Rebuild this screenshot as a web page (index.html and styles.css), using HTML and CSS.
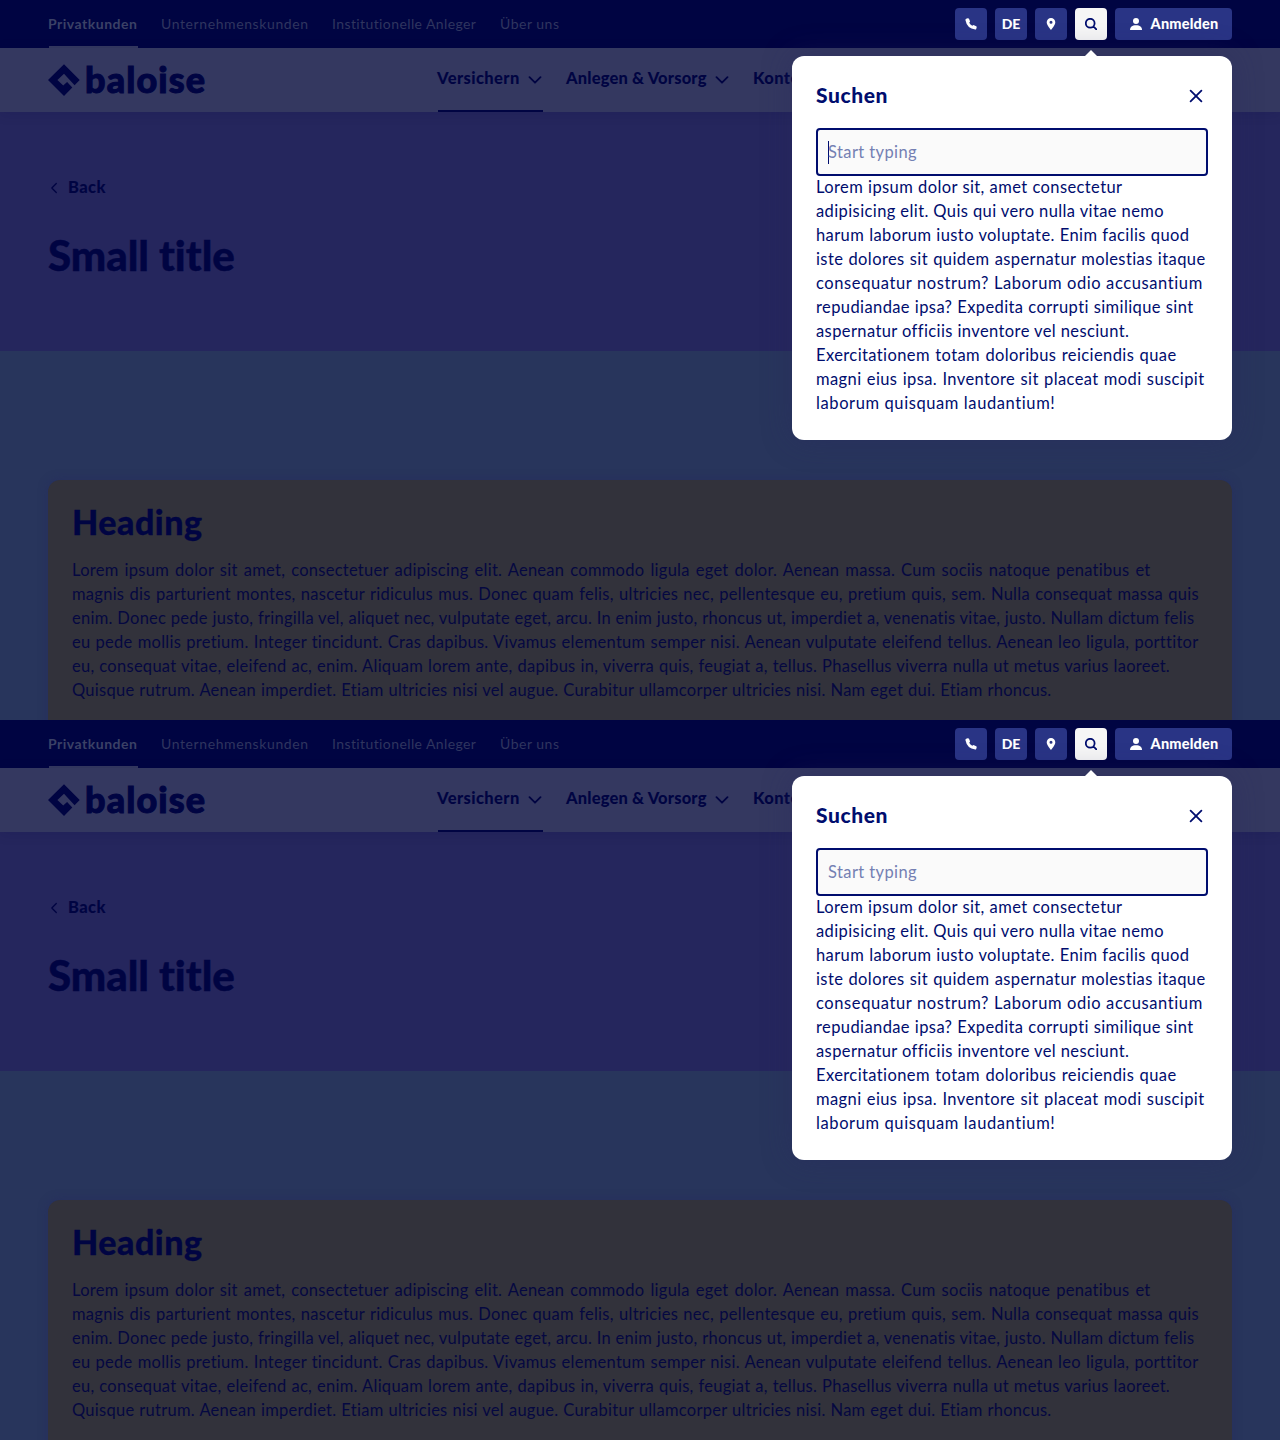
FILE: index.html
```html
<!DOCTYPE html>
<html lang="de">
<head>
<meta charset="utf-8">
<title>Baloise</title>
<link rel="stylesheet" href="styles.css">
</head>
<body>
<svg class="sprite" aria-hidden="true">
  <symbol id="logo" viewBox="0 0 32 32"><path d="M16 .3 31.7 16l-5.100 5.200L16 9.800 9.400 16l5.800 5.600 3.900-3.600 5.200 5.600L16 32 0 16z"/></symbol>
  <symbol id="phone" viewBox="0 0 12 12"><path d="M1.2.8 2.8.2Q3.6.1 4 .8L5 3.2Q5.1 3.7 4.6 4.2L4.2 4.7Q5.2 6.8 7.3 7.8L8 7.3Q8.4 6.9 9 7.2L11.2 8.2Q11.9 8.5 11.7 9.2L11.2 11Q11 11.7 10.2 11.6 2 10.5.4 2 .4 1.1 1.2.8z"/></symbol>
  <symbol id="pin" viewBox="0 0 12 12"><path fill-rule="evenodd" d="M6 0a4.300 4.300 0 0 0-4.300 4.300C1.700 7.200 6 12 6 12s4.300-4.800 4.300-7.700A4.300 4.300 0 0 0 6 0zm0 2.800a1.500 1.500 0 1 1 0 3 1.500 1.500 0 0 1 0-3z"/></symbol>
  <symbol id="search" viewBox="0 0 12 12"><path class="line" d="M9.600 5.200a4.400 4.400 0 1 1-8.800 0 4.400 4.400 0 0 1 8.800 0zM8.400 8.400l3.100 3.100"/></symbol>
  <symbol id="person" viewBox="0 0 12 12"><circle cx="6" cy="3" r="3"/><path d="M0 12c0-3 2-4.700 6-4.700s6 1.700 6 4.700z"/></symbol>
  <symbol id="down" viewBox="0 0 14 8"><path class="line" d="M1.500 1.200 7 6.700l5.500-5.500"/></symbol>
  <symbol id="left" viewBox="0 0 8 12"><path class="line thin" d="M6.300 1.500 1.800 6l4.500 4.500"/></symbol>
  <symbol id="close" viewBox="0 0 14 14"><path class="line" d="m1.600 1.600 10.800 10.800M12.400 1.600 1.600 12.400"/></symbol>
</svg>

<section class="page">
  <header>
    <div class="meta">
      <nav class="segments"><a class="active">Privatkunden</a><a class="s2">Unternehmenskunden</a><a class="s3">Institutionelle Anleger</a><a class="s4">Über uns</a></nav>
      <div class="actions">
        <button><svg class="ico"><use href="#phone"/></svg></button>
        <button>DE</button>
        <button><svg class="ico"><use href="#pin"/></svg></button>
        <button class="on"><svg class="ico"><use href="#search"/></svg></button>
        <button class="login"><svg class="ico"><use href="#person"/></svg><span>Anmelden</span></button>
      </div>
    </div>
    <div class="main-nav">
      <div class="brand"><svg><use href="#logo"/></svg><span>baloise</span></div>
      <nav class="topics">
        <a class="current"><span class="t1">Versichern</span><svg><use href="#down"/></svg></a>
        <a><span class="t2">Anlegen &amp; Vorsorg</span><svg><use href="#down"/></svg></a>
        <a><span>Konten</span></a>
      </nav>
    </div>
  </header>
  <div class="hero">
    <a class="back"><svg><use href="#left"/></svg><span>Back</span></a>
    <h1>Small title</h1>
  </div>
  <main>
    <article class="card">
      <h2>Heading</h2>
      <p class="copy">
        <span style="width:1078.5px">Lorem ipsum dolor sit amet, consectetuer adipiscing elit. Aenean commodo ligula eget dolor. Aenean massa. Cum sociis natoque penatibus et</span>
        <span style="width:1127px">magnis dis parturient montes, nascetur ridiculus mus. Donec quam felis, ultricies nec, pellentesque eu, pretium quis, sem. Nulla consequat massa quis</span>
        <span style="width:1122.5px">enim. Donec pede justo, fringilla vel, aliquet nec, vulputate eget, arcu. In enim justo, rhoncus ut, imperdiet a, venenatis vitae, justo. Nullam dictum felis</span>
        <span style="width:1126.5px">eu pede mollis pretium. Integer tincidunt. Cras dapibus. Vivamus elementum semper nisi. Aenean vulputate eleifend tellus. Aenean leo ligula, porttitor</span>
        <span style="width:1098px">eu, consequat vitae, eleifend ac, enim. Aliquam lorem ante, dapibus in, viverra quis, feugiat a, tellus. Phasellus viverra nulla ut metus varius laoreet.</span>
        <span style="width:979.5px">Quisque rutrum. Aenean imperdiet. Etiam ultricies nisi vel augue. Curabitur ullamcorper ultricies nisi. Nam eget dui. Etiam rhoncus.</span>
      </p>
    </article>
  </main>
  <aside class="popup">
    <div class="popup-head"><h3>Suchen</h3><svg><use href="#close"/></svg></div>
    <div class="field focus"><span>Start typing</span></div>
    <p class="copy">
      <span style="width:306.5px">Lorem ipsum dolor sit, amet consectetur</span>
      <span style="width:345.5px">adipisicing elit. Quis qui vero nulla vitae nemo</span>
      <span style="width:373.5px">harum laborum iusto voluptate. Enim facilis quod</span>
      <span style="width:389.5px">iste dolores sit quidem aspernatur molestias itaque</span>
      <span style="width:384px;letter-spacing:.6px">consequatur nostrum? Laborum odio accusantium</span>
      <span style="width:377.5px">repudiandae ipsa? Expedita corrupti similique sint</span>
      <span style="width:312px">aspernatur officiis inventore vel nesciunt.</span>
      <span style="width:360.5px">Exercitationem totam doloribus reiciendis quae</span>
      <span style="width:388.5px">magni eius ipsa. Inventore sit placeat modi suscipit</span>
      <span style="width:238.5px;letter-spacing:.6px">laborum quisquam laudantium!</span>
    </p>
  </aside>
</section>

<section class="page">
  <header>
    <div class="meta">
      <nav class="segments"><a class="active">Privatkunden</a><a class="s2">Unternehmenskunden</a><a class="s3">Institutionelle Anleger</a><a class="s4">Über uns</a></nav>
      <div class="actions">
        <button><svg class="ico"><use href="#phone"/></svg></button>
        <button>DE</button>
        <button><svg class="ico"><use href="#pin"/></svg></button>
        <button class="on"><svg class="ico"><use href="#search"/></svg></button>
        <button class="login"><svg class="ico"><use href="#person"/></svg><span>Anmelden</span></button>
      </div>
    </div>
    <div class="main-nav">
      <div class="brand"><svg><use href="#logo"/></svg><span>baloise</span></div>
      <nav class="topics">
        <a class="current"><span class="t1">Versichern</span><svg><use href="#down"/></svg></a>
        <a><span class="t2">Anlegen &amp; Vorsorg</span><svg><use href="#down"/></svg></a>
        <a><span>Konten</span></a>
      </nav>
    </div>
  </header>
  <div class="hero">
    <a class="back"><svg><use href="#left"/></svg><span>Back</span></a>
    <h1>Small title</h1>
  </div>
  <main>
    <article class="card">
      <h2>Heading</h2>
      <p class="copy">
        <span style="width:1078.5px">Lorem ipsum dolor sit amet, consectetuer adipiscing elit. Aenean commodo ligula eget dolor. Aenean massa. Cum sociis natoque penatibus et</span>
        <span style="width:1127px">magnis dis parturient montes, nascetur ridiculus mus. Donec quam felis, ultricies nec, pellentesque eu, pretium quis, sem. Nulla consequat massa quis</span>
        <span style="width:1122.5px">enim. Donec pede justo, fringilla vel, aliquet nec, vulputate eget, arcu. In enim justo, rhoncus ut, imperdiet a, venenatis vitae, justo. Nullam dictum felis</span>
        <span style="width:1126.5px">eu pede mollis pretium. Integer tincidunt. Cras dapibus. Vivamus elementum semper nisi. Aenean vulputate eleifend tellus. Aenean leo ligula, porttitor</span>
        <span style="width:1098px">eu, consequat vitae, eleifend ac, enim. Aliquam lorem ante, dapibus in, viverra quis, feugiat a, tellus. Phasellus viverra nulla ut metus varius laoreet.</span>
        <span style="width:979.5px">Quisque rutrum. Aenean imperdiet. Etiam ultricies nisi vel augue. Curabitur ullamcorper ultricies nisi. Nam eget dui. Etiam rhoncus.</span>
      </p>
    </article>
  </main>
  <aside class="popup">
    <div class="popup-head"><h3>Suchen</h3><svg><use href="#close"/></svg></div>
    <div class="field"><span>Start typing</span></div>
    <p class="copy">
      <span style="width:306.5px">Lorem ipsum dolor sit, amet consectetur</span>
      <span style="width:345.5px">adipisicing elit. Quis qui vero nulla vitae nemo</span>
      <span style="width:373.5px">harum laborum iusto voluptate. Enim facilis quod</span>
      <span style="width:389.5px">iste dolores sit quidem aspernatur molestias itaque</span>
      <span style="width:384px;letter-spacing:.6px">consequatur nostrum? Laborum odio accusantium</span>
      <span style="width:377.5px">repudiandae ipsa? Expedita corrupti similique sint</span>
      <span style="width:312px">aspernatur officiis inventore vel nesciunt.</span>
      <span style="width:360.5px">Exercitationem totam doloribus reiciendis quae</span>
      <span style="width:388.5px">magni eius ipsa. Inventore sit placeat modi suscipit</span>
      <span style="width:238.5px;letter-spacing:.6px">laborum quisquam laudantium!</span>
    </p>
  </aside>
</section>
</body>
</html>
```
FILE: styles.css
```css
* { box-sizing: border-box; }
body, h1, h2, h3, p { margin: 0; }
body {
  font: 400 16.5px/24px Lato, "Liberation Sans", sans-serif;
  font-variant-ligatures: none;
  color: #000442;
  background: #28355c;
}
.sprite { display: none; }
svg { fill: currentColor; flex: none; }
.line { fill: none; stroke: currentColor; stroke-width: 1.8; stroke-linecap: round; stroke-linejoin: round; }
.thin { stroke-width: 1.3; }

.page { position: relative; height: 720px; overflow: hidden; background: #28355c; }

.meta { height: 48px; padding: 0 48px; background: #000442; display: flex; justify-content: space-between; align-items: center; }
.segments { display: flex; align-self: stretch; font-size: 14px; line-height: 48px; color: #2f355f; white-space: nowrap; }
.segments a { height: 48px; margin-right: 23px; letter-spacing: .6px; }
.segments .active { width: 90px; font-weight: 700; color: #3b4166; letter-spacing: .5px; background: linear-gradient(#343860, #343860) 1px 100% / 89px 2px no-repeat; }
.segments .s2 { width: 148px; }
.segments .s3 { width: 145px; letter-spacing: .4px; }
.segments .s4 { letter-spacing: .5px; }
.actions { display: flex; gap: 8px; }
.actions button {
  width: 32px; height: 32px; padding: 0; border: 0; border-radius: 4px;
  background: #293485; color: #fff; font: 900 14px/32px Lato, sans-serif;
  display: flex; align-items: center; justify-content: center;
}
.actions .on { background: #f6f6f6; color: #000d6e; }
.actions .login { width: 117px; gap: 9px; padding-left: 1px; font-size: 14.5px; letter-spacing: .2px; }
.ico { width: 12px; height: 12px; }

.main-nav { position: relative; height: 64px; padding: 0 48px; background: #343860; display: flex; box-shadow: 0 2px 12px rgba(0, 4, 66, .12); }
.brand { display: flex; align-items: center; width: 389px; gap: 5px; }
.brand svg { width: 32px; height: 32px; }
.brand span { font-weight: 900; font-size: 36px; line-height: 60px; letter-spacing: 1.1px; margin-top: -3px; -webkit-text-stroke: 1px currentColor; }
.topics { display: flex; font-weight: 900; white-space: nowrap; line-height: 60px; }
.topics a { display: flex; height: 64px; margin-right: 23px; letter-spacing: .4px; }
.topics .current { background: linear-gradient(#000442, #000442) 1px 100% / 105px 2px no-repeat; }
.topics svg { width: 14px; height: 8px; margin-top: 28px; }
.topics .t1 { width: 91px; margin-right: 1px; }
.topics .t2 { width: 149px; margin-right: 1px; letter-spacing: .17px; }
.topics svg { margin-left: -1px; margin-right: 1px; }

.hero { height: 239px; padding: 64px 48px 0; background: #25265d; }
.back { display: flex; align-items: center; height: 24px; padding-left: 2px; gap: 10px; font-weight: 900; letter-spacing: .4px; line-height: 22px; }
.back svg { width: 8px; height: 12px; }
.back span { margin-top: -2px; }
h1 { margin-top: 31px; font-weight: 900; font-size: 42px; line-height: 48px; letter-spacing: 0; -webkit-text-stroke: .4px currentColor; }

main { padding: 129px 48px 0; }
.card { height: 400px; padding: 22px 24px; border-radius: 12px; background: #32323b; box-shadow: 0 0 10px rgba(36, 42, 96, .6); }
h2 { font-weight: 900; font-size: 34px; line-height: 40px; letter-spacing: .5px; margin-bottom: 16px; -webkit-text-stroke: .3px currentColor; }
.copy span { display: block; height: 24px; white-space: nowrap; letter-spacing: .4px; text-align: justify; text-align-last: justify; }
.card .copy { color: #050841; }
.card .copy span { letter-spacing: .27px; }

.popup {
  position: absolute; top: 56px; right: 48px; width: 440px; height: 384px;
  padding: 24px; border-radius: 12px; background: #fff; color: #000d6e;
  box-shadow: 0 0 30px rgba(41, 41, 95, .4);
}
.popup .copy { margin-top: -1px; }
.popup::before {
  content: ""; position: absolute; top: -6px; left: 293px;
  border: 6px solid transparent; border-top: 0; border-bottom-color: #fff;
}
.popup-head { display: flex; justify-content: space-between; align-items: center; height: 32px; padding-right: 5px; margin: 0 0 16px; }
.popup-head svg { width: 14px; height: 14px; }
h3 { font-weight: 900; font-size: 21px; line-height: 30px; letter-spacing: .6px; margin-top: -2px; }
.field { height: 48px; padding: 0 10px; border: 2px solid #000d6e; border-radius: 4px; background: #fafafa; color: #7480b3; line-height: 44px; letter-spacing: .4px; display: flex; align-items: center; }
.focus::before { content: ""; width: 1px; height: 23px; margin-right: -1px; background: #000d6e; }
```
